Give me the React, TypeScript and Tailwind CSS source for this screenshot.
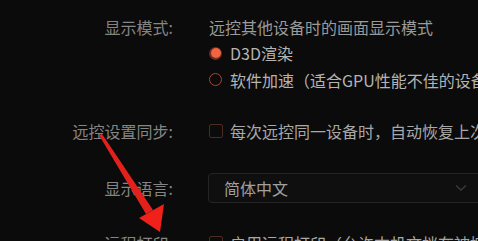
import React from "react";

const font = { fontFamily: '"Noto Sans CJK SC", "Noto Sans", sans-serif' };

function Label({ children }: { children: React.ReactNode }) {
  return <div className="w-[173px] shrink-0 text-right text-[#858585]">{children}</div>;
}

function Radio({ checked }: { checked?: boolean }) {
  return checked ? (
    <span className="flex h-[13px] w-[13px] shrink-0 items-center justify-center rounded-full bg-[#6b2c22]">
      <span className="h-[10px] w-[10px] rounded-full bg-[#f0643f]" />
    </span>
  ) : (
    <span className="h-[13px] w-[13px] shrink-0 rounded-full border-[1.5px] border-[#9a4a3e]" />
  );
}

function Checkbox() {
  return <span className="h-[14px] w-[14px] shrink-0 rounded-[2px] border-[1.5px] border-[#4e2a25]" />;
}

export default function App() {
  return (
    <div
      className="relative h-[241px] w-[478px] overflow-hidden whitespace-nowrap bg-[#0b0b0b] pt-[14px] text-[16px] leading-[26px]"
      style={font}
    >
      <div className="flex gap-[36px]">
        <Label>显示模式:</Label>
        <div className="flex flex-col">
          <div className="h-[26px] text-[#9a9a9a]">远控其他设备时的画面显示模式</div>
          <div className="flex h-[26px] items-center gap-[8px] text-[#b4b4b4]">
            <Radio checked />
            D3D渲染
          </div>
          <div className="flex h-[27px] items-center gap-[8px] text-[#b4b4b4]">
            <Radio />
            软件加速（适合GPU性能不佳的设备）
          </div>
        </div>
      </div>

      <div className="mt-[25px] flex h-[26px] items-center gap-[36px]">
        <Label>远控设置同步:</Label>
        <div className="flex items-center gap-[7px] text-[#a8a8a8]">
          <Checkbox />
          每次远控同一设备时，自动恢复上次的设置
        </div>
      </div>

      <div className="mt-[29px] flex items-center gap-[35px]">
        <Label>显示语言:</Label>
        <div className="flex h-[30px] w-[300px] shrink-0 items-center justify-between rounded-[4px] border border-[#242424] bg-[#0f0f0f] pl-[15px] pr-[40px] text-[#a0a0a0]">
          <span>简体中文</span>
          <svg width="12" height="8" viewBox="0 0 12 8" fill="none" className="-translate-x-[0px]">
            <path d="M1 1.5 L6 6 L11 1.5" stroke="#3a3a3a" strokeWidth="1.4" />
          </svg>
        </div>
      </div>

      <div className="mt-[27px] flex h-[26px] items-center gap-[36px]">
        <Label>远程打印:</Label>
        <div className="flex items-center gap-[7px] text-[#a8a8a8]">
          <Checkbox />
          启用远程打印（允许本机文档在被控端打印）
        </div>
      </div>

      <svg className="pointer-events-none absolute left-0 top-0" width="478" height="241" viewBox="0 0 478 241">
        <path d="M99 135 L102 134 L153 210 L146 214 Z" fill="#e3211c" />
        <path d="M139 218 L164 204 L160 232 Z" fill="#f0201a" />
      </svg>
    </div>
  );
}
